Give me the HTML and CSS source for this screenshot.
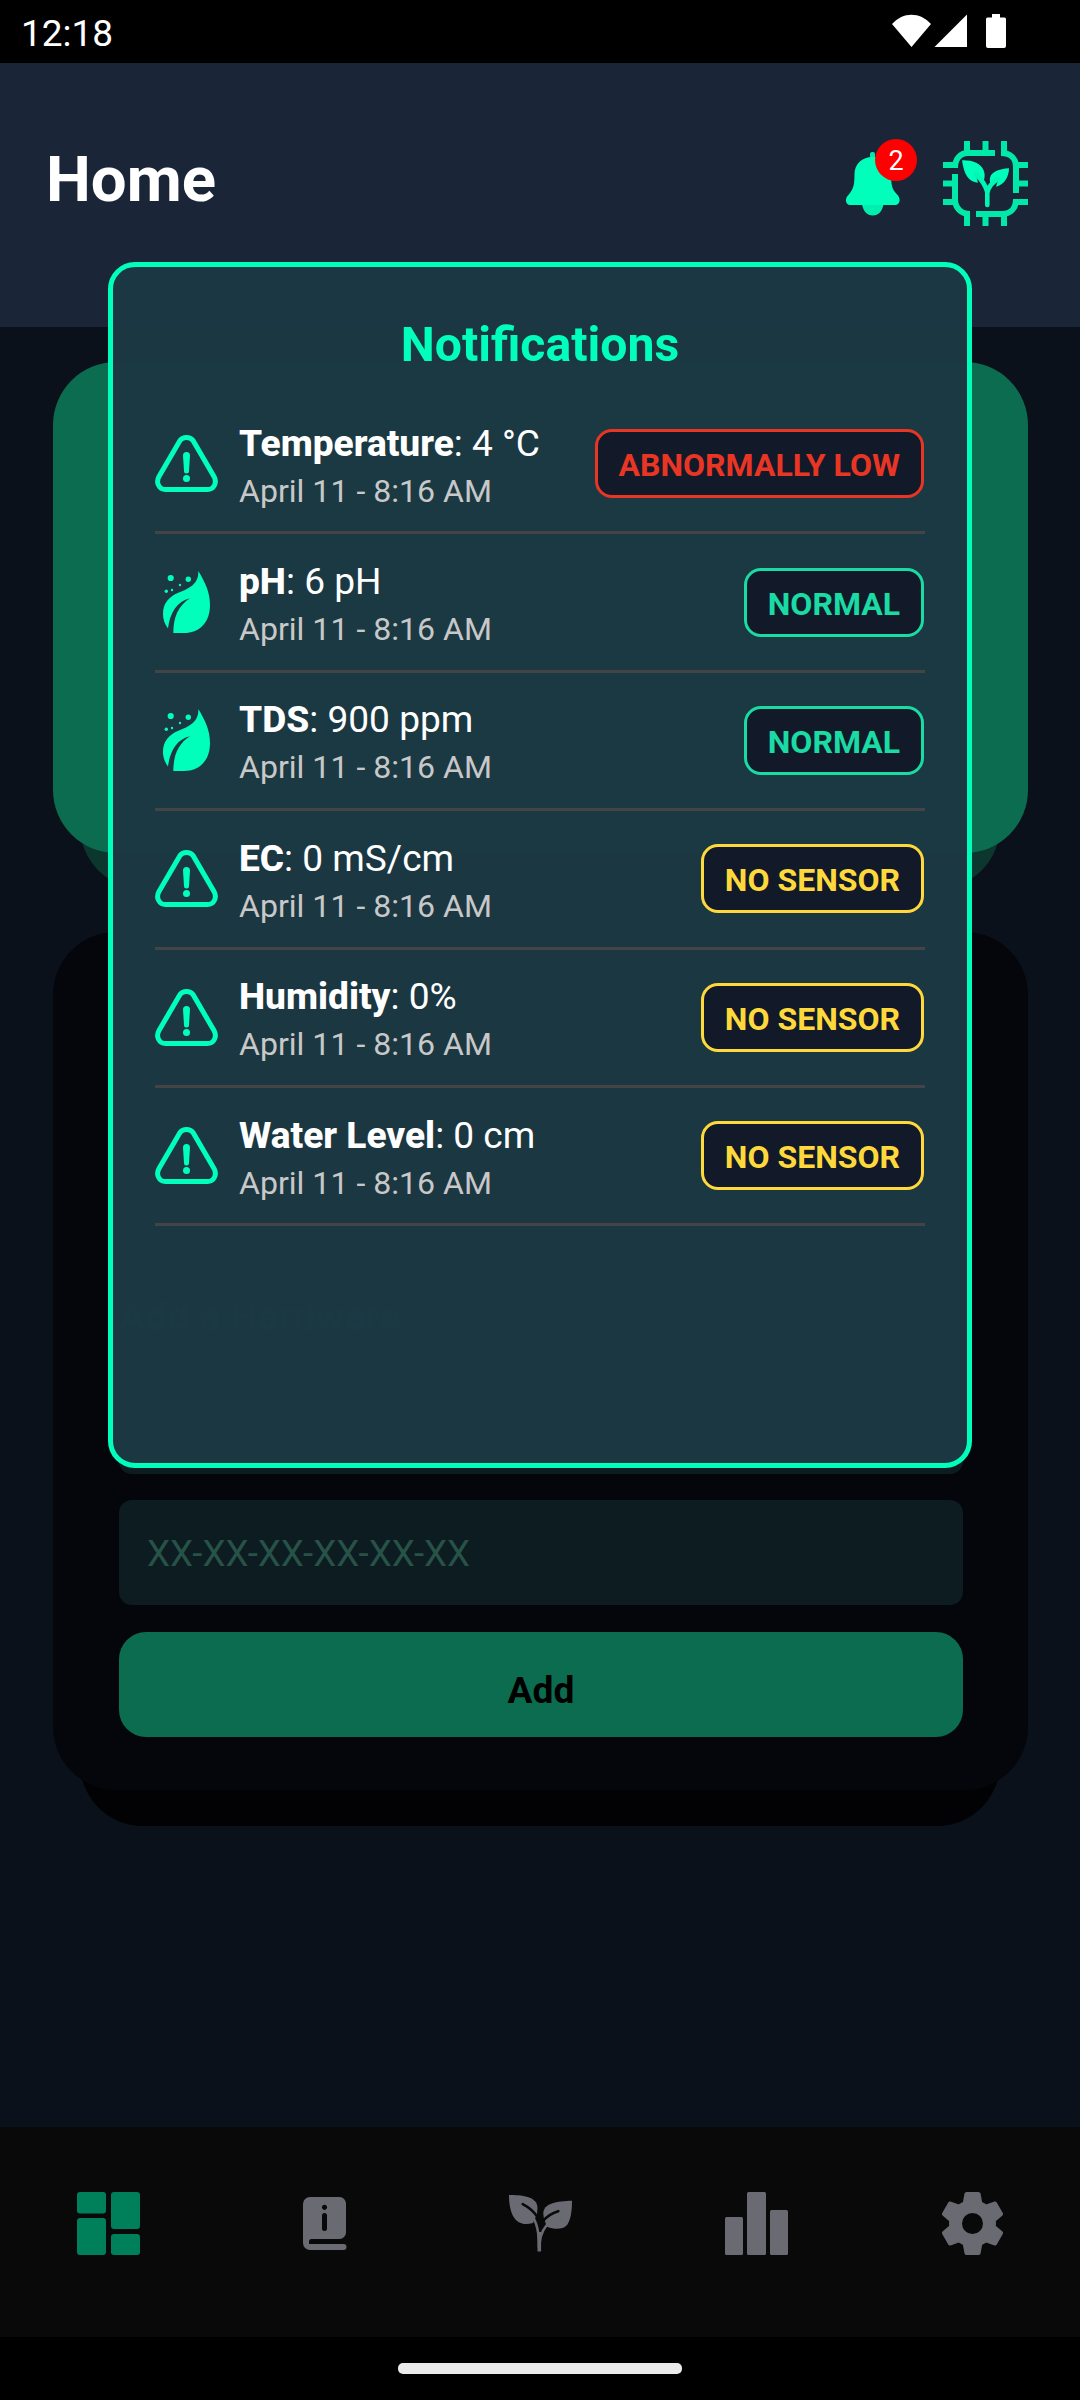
FILE: index.html
```html
<!DOCTYPE html>
<html lang="en">
<head>
<meta charset="utf-8">
<title>Home</title>
<link rel="stylesheet" href="styles.css">
</head>
<body>
<svg class="defs" aria-hidden="true">
  <symbol id="warning" viewBox="0 0 63 57">
    <path d="M25 5.500 4 41.500C.6 47.500 4 54.500 10.500 54.500H52.500C59 54.500 62.400 47.500 59 41.500L38 5.500C35 1.500 28 1.500 25 5.500Z" fill="none" stroke="currentColor" stroke-width="5"/>
    <path d="M28 20.500a3.500 3.500 0 0 1 7 0L34 36a2.500 2.500 0 0 1-5 0Z" fill="currentColor"/>
    <circle cx="31.500" cy="43.500" r="3.500" fill="currentColor"/>
  </symbol>
  <symbol id="leaf" viewBox="0 0 63 63">
    <path d="M43.300 0C50 11 55 21 55 34C55 52 44 62 29 62H18.300C18.500 46 23 35 35 27.300C22 30 15 42 13 57.500C9.500 53 8 48 8 43C8 32 14 25.500 24 21.500C34 17.500 44 13 43.300 0Z" fill="currentColor"/>
    <g fill="currentColor"><circle cx="15.700" cy="7" r="3.100"/><circle cx="33.300" cy="8.300" r="2.700"/><circle cx="25" cy="14" r="1.200"/><circle cx="11.300" cy="20.300" r="1.700"/><circle cx="17" cy="19" r="1.200"/></g>
  </symbol>
</svg>

<div class="status-bar">
  <span>12:18</span>
  <svg width="115" height="36" viewBox="0 0 115 36" fill="#fff">
    <path d="M0 10C11-2.500 28-2.500 39 10L19.500 33Z"/>
    <path d="M75 .500V33H42.500Z"/>
    <path d="M100 0h8v3.500h4.500a1.500 1.500 0 0 1 1.500 1.500v27a2 2 0 0 1-2 2H96a2 2 0 0 1-2-2V5a1.500 1.500 0 0 1 1.500-1.500H100Z"/>
  </svg>
</div>

<header class="header">
  <h1>Home</h1>
  <div class="header-actions">
    <div class="bell">
      <svg width="54" height="64" viewBox="0 0 54 64">
        <path d="M16 52h21.500c-1 7-5 11.500-10.700 11.500S17 59 16 52Z" fill="#00efae"/>
        <rect x="24" y="0" width="5" height="12" rx="2" fill="#00e9a8"/>
        <path d="M26.700 5C37.500 5 45 12 45 22C45 36 47 38 52 43.500C55 47.500 53.500 53 49.500 53H4C0 53-1.500 47.500 1.500 44C6.500 38 8.500 36 8.500 22C8.500 12 16 5 26.700 5Z" fill="#00ffba"/>
      </svg>
      <span class="bell-count">2</span>
    </div>
    <svg width="85" height="85" viewBox="0 0 85 85">
      <g fill="none" stroke="#00e9a8" stroke-width="6">
        <path d="M0 24H15M12 27C12 18 17 12 25 12H52M24 0V12M42.500 0V12"/>
        <path d="M61 0V15M58 12C67 12 73 17 73 26V52M73 24H85M73 42.500H85"/>
        <path d="M85 61H70M73 58C73 68 67 73 59 73H33M61 73V85M42.500 73V85"/>
        <path d="M24 85V70M27 73C18 73 12 67 12 58V33M0 42.500H12M0 61H12"/>
      </g>
      <g fill="#00ffba">
        <path d="M19 19.300C29 19 37 22 40 28C42 32 42 35 41 39L38 42L32.500 32L35 41.700C25 41 21 33 19 19.300Z"/>
        <path d="M66 27.300C56 28 48 31 47 37C46.500 40 47 41 48 43L55.500 38L53 45.700C61 44 66 36 66 27.300Z"/>
      </g>
      <path d="M33 33Q42 42 44.300 51M55 38Q46 43 44.300 52V64" fill="none" stroke="#00f6b2" stroke-width="4.600" stroke-linecap="round"/>
    </svg>
  </div>
</header>

<main class="content">
  <section class="card card-green"></section>
  <section class="card card-dark">
    <h3 class="form-title">Add a Hardware</h3>
    <div class="field"></div>
    <div class="field">XX-XX-XX-XX-XX-XX</div>
    <button class="add">Add</button>
  </section>
</main>

<nav class="tabs">
  <svg width="63" height="63" class="active" fill="currentColor"><rect width="29" height="21.500" rx="3"/><rect y="26" width="29" height="37" rx="3"/><rect x="34" width="29" height="37" rx="3"/><rect x="34" y="42" width="29" height="21" rx="3"/></svg>
  <svg width="63" height="63" fill="currentColor"><path fill-rule="evenodd" d="M17 5H46.500A6.500 6.500 0 0 1 53 11.500V40.500A6.500 6.500 0 0 1 46.500 47H18.500a2.500 2.500 0 0 0-2.500 2.500V52H50.500a3 3 0 0 1 0 6H17A7 7 0 0 1 10 51V12A7 7 0 0 1 17 5ZM31.500 12.700a2.600 2.600 0 1 0 .01 0ZM29 23.500V36.500a2.500 2.500 0 0 0 5 0V23.500a2.500 2.500 0 0 0-5 0Z"/></svg>
  <svg width="63" height="63" fill="currentColor"><path d="M0 3C12 3 28.500 4 28.500 16L28 22L24 31C7 36 0 23 0 3Z"/><path d="M63 8.700C48 9 34 11 34.300 22L35 27L38 34.700C46 38 54 37 57 34C61.500 29.500 63 20 63 8.700Z"/><g fill="none"><path d="M13.700 12.200Q23 17 28.500 25M49.300 19.200Q40 22 34.500 28.500" stroke="#090909" stroke-width="2.600" stroke-linecap="round"/><path d="M22.500 23Q30.300 33 30 56M43 28Q31.500 37 30.500 52" stroke="currentColor" stroke-width="2.600"/><path d="M30.300 40V59.500" stroke="currentColor" stroke-width="3.600"/></g></svg>
  <svg width="63" height="63" fill="currentColor"><rect y="25" width="18" height="38" rx="1.500"/><rect x="22" width="19" height="63" rx="1.500"/><rect x="45" y="18" width="18" height="45" rx="1.500"/></svg>
  <svg width="63" height="63" fill="currentColor"><circle cx="31.500" cy="31.500" r="17" fill="none" stroke="currentColor" stroke-width="13"/><g><path id="tooth" d="M22 15V9.500L23.500 1.500Q24 0 25.500 0H37.500Q39 0 39.500 1.500L41 9.500V15Z"/><use href="#tooth" transform="rotate(60 31.500 31.500)"/><use href="#tooth" transform="rotate(120 31.500 31.500)"/><use href="#tooth" transform="rotate(180 31.500 31.500)"/><use href="#tooth" transform="rotate(240 31.500 31.500)"/><use href="#tooth" transform="rotate(300 31.500 31.500)"/></g></svg>
</nav>
<footer class="gesture-bar"><span></span></footer>

<div class="popup" role="dialog">
  <h2>Notifications</h2>
  <ul>
    <li><svg width="63" height="57"><use href="#warning"/></svg><div class="info"><p><b>Temperature</b>: 4 °C</p><time>April 11 - 8:16 AM</time></div><span class="badge low">ABNORMALLY LOW</span></li>
    <li><svg width="63" height="63"><use href="#leaf"/></svg><div class="info"><p><b>pH</b>: 6 pH</p><time>April 11 - 8:16 AM</time></div><span class="badge normal">NORMAL</span></li>
    <li><svg width="63" height="63"><use href="#leaf"/></svg><div class="info"><p><b>TDS</b>: 900 ppm</p><time>April 11 - 8:16 AM</time></div><span class="badge normal">NORMAL</span></li>
    <li><svg width="63" height="57"><use href="#warning"/></svg><div class="info"><p><b>EC</b>: 0 mS/cm</p><time>April 11 - 8:16 AM</time></div><span class="badge none">NO SENSOR</span></li>
    <li><svg width="63" height="57"><use href="#warning"/></svg><div class="info"><p><b>Humidity</b>: 0%</p><time>April 11 - 8:16 AM</time></div><span class="badge none">NO SENSOR</span></li>
    <li><svg width="63" height="57"><use href="#warning"/></svg><div class="info"><p><b>Water Level</b>: 0 cm</p><time>April 11 - 8:16 AM</time></div><span class="badge none">NO SENSOR</span></li>
  </ul>
</div>
</body>
</html>
```
FILE: styles.css
```css
* { box-sizing: border-box; margin: 0; padding: 0; }
body {
  position: relative;
  display: flex;
  flex-direction: column;
  width: 1080px;
  height: 2400px;
  background: #0a111a;
  color: #fff;
  font-family: Roboto, sans-serif;
  overflow: hidden;
}
svg { display: block; flex: none; overflow: visible; }
.defs { position: absolute; width: 0; height: 0; }

.status-bar {
  display: flex;
  justify-content: space-between;
  height: 63px;
  padding: 14px 73px 0 21px;
  background: #000;
  font-size: 37px;
  line-height: 40px;
}

.header {
  display: flex;
  justify-content: space-between;
  height: 264px;
  padding: 0 52px 0 46px;
  background: #1a2638;
}
.header h1 { margin-top: 80px; font-size: 63.5px; line-height: 74px; font-weight: 700; }
.header-actions { display: flex; gap: 43px; padding-top: 78px; }
.bell { position: relative; padding-top: 11px; }
.bell-count {
  position: absolute;
  top: -2px;
  left: 29px;
  width: 42px;
  height: 42px;
  border-radius: 50%;
  background: #f00;
  font-size: 27px;
  line-height: 44px;
  text-align: center;
}

.content {
  flex: 1;
  display: flex;
  flex-direction: column;
  gap: 79px;
  padding: 35px 52px 0 53px;
}
.card { position: relative; z-index: 0; }
.card::before, .card::after { content: ""; position: absolute; border-radius: 63px; }
.card::before { inset: 36px 28px -36px 27px; z-index: -2; }
.card::after { inset: 0; z-index: -1; }
.card-green { height: 491px; }
.card-green::before { background: #0c372f; }
.card-green::after { background: #0c6c50; }
.card-dark {
  display: flex;
  flex-direction: column;
  justify-content: flex-end;
  height: 858px;
  padding: 0 65px 53px 66px;
}
.card-dark::before { background: #020204; }
.card-dark::after { background: #05060b; }
.form-title { margin-bottom: 28px; font-size: 39.4px; line-height: 48px; color: #0c6c50; }
.field {
  height: 105px;
  margin-bottom: 26px;
  padding-left: 28px;
  border-radius: 13px;
  background: #0d1c20;
  color: #275247;
  font-size: 36.75px;
  line-height: 108px;
}
.add {
  height: 105px;
  margin-top: 1px;
  padding-top: 11px;
  border: 0;
  border-radius: 27px;
  background: #0c6c50;
  color: #000;
  font: 700 37.2px Roboto, sans-serif;
}

.tabs {
  display: flex;
  justify-content: space-around;
  align-items: center;
  height: 210px;
  padding-bottom: 17px;
  background: #090909;
  color: #6a6a72;
}
.tabs .active { color: #00805a; }
.gesture-bar { height: 63px; padding-top: 26px; background: #000; }
.gesture-bar span { display: block; width: 284px; height: 11px; margin: 0 auto; border-radius: 5px; background: #ebebeb; }

.popup {
  position: absolute;
  top: 262px;
  left: 108px;
  width: 864px;
  height: 1206px;
  padding: 0 42px;
  border: 5px solid #00ffba;
  border-radius: 27px;
  background: rgba(27, 56, 67, .985);
}
.popup h2 { margin-top: 50px; font-size: 48.2px; line-height: 56px; color: #00ffba; text-align: center; }
.popup ul { margin-top: 23px; list-style: none; }
.popup li {
  display: flex;
  align-items: center;
  height: 138.4px;
  border-bottom: 3px solid #444446;
}
.popup li svg { color: #00ffba; }
.info { flex: 1; padding: 7px 0 0 21px; }
.info p { font-size: 37.1px; line-height: 44px; white-space: nowrap; }
.info b { font-weight: 800; }
.info time { display: block; padding-top: 3px; font-size: 32.1px; line-height: 44px; color: #c8c8c8; }
.badge {
  height: 69px;
  margin-right: 1px;
  padding: 0 21px;
  border: 3px solid;
  border-radius: 17px;
  background: #121a29;
  font-size: 32px;
  line-height: 66px;
  font-weight: 700;
}
.low { color: #e93524; }
.normal { color: #1adba4; }
.none { color: #ffd93b; }
```
